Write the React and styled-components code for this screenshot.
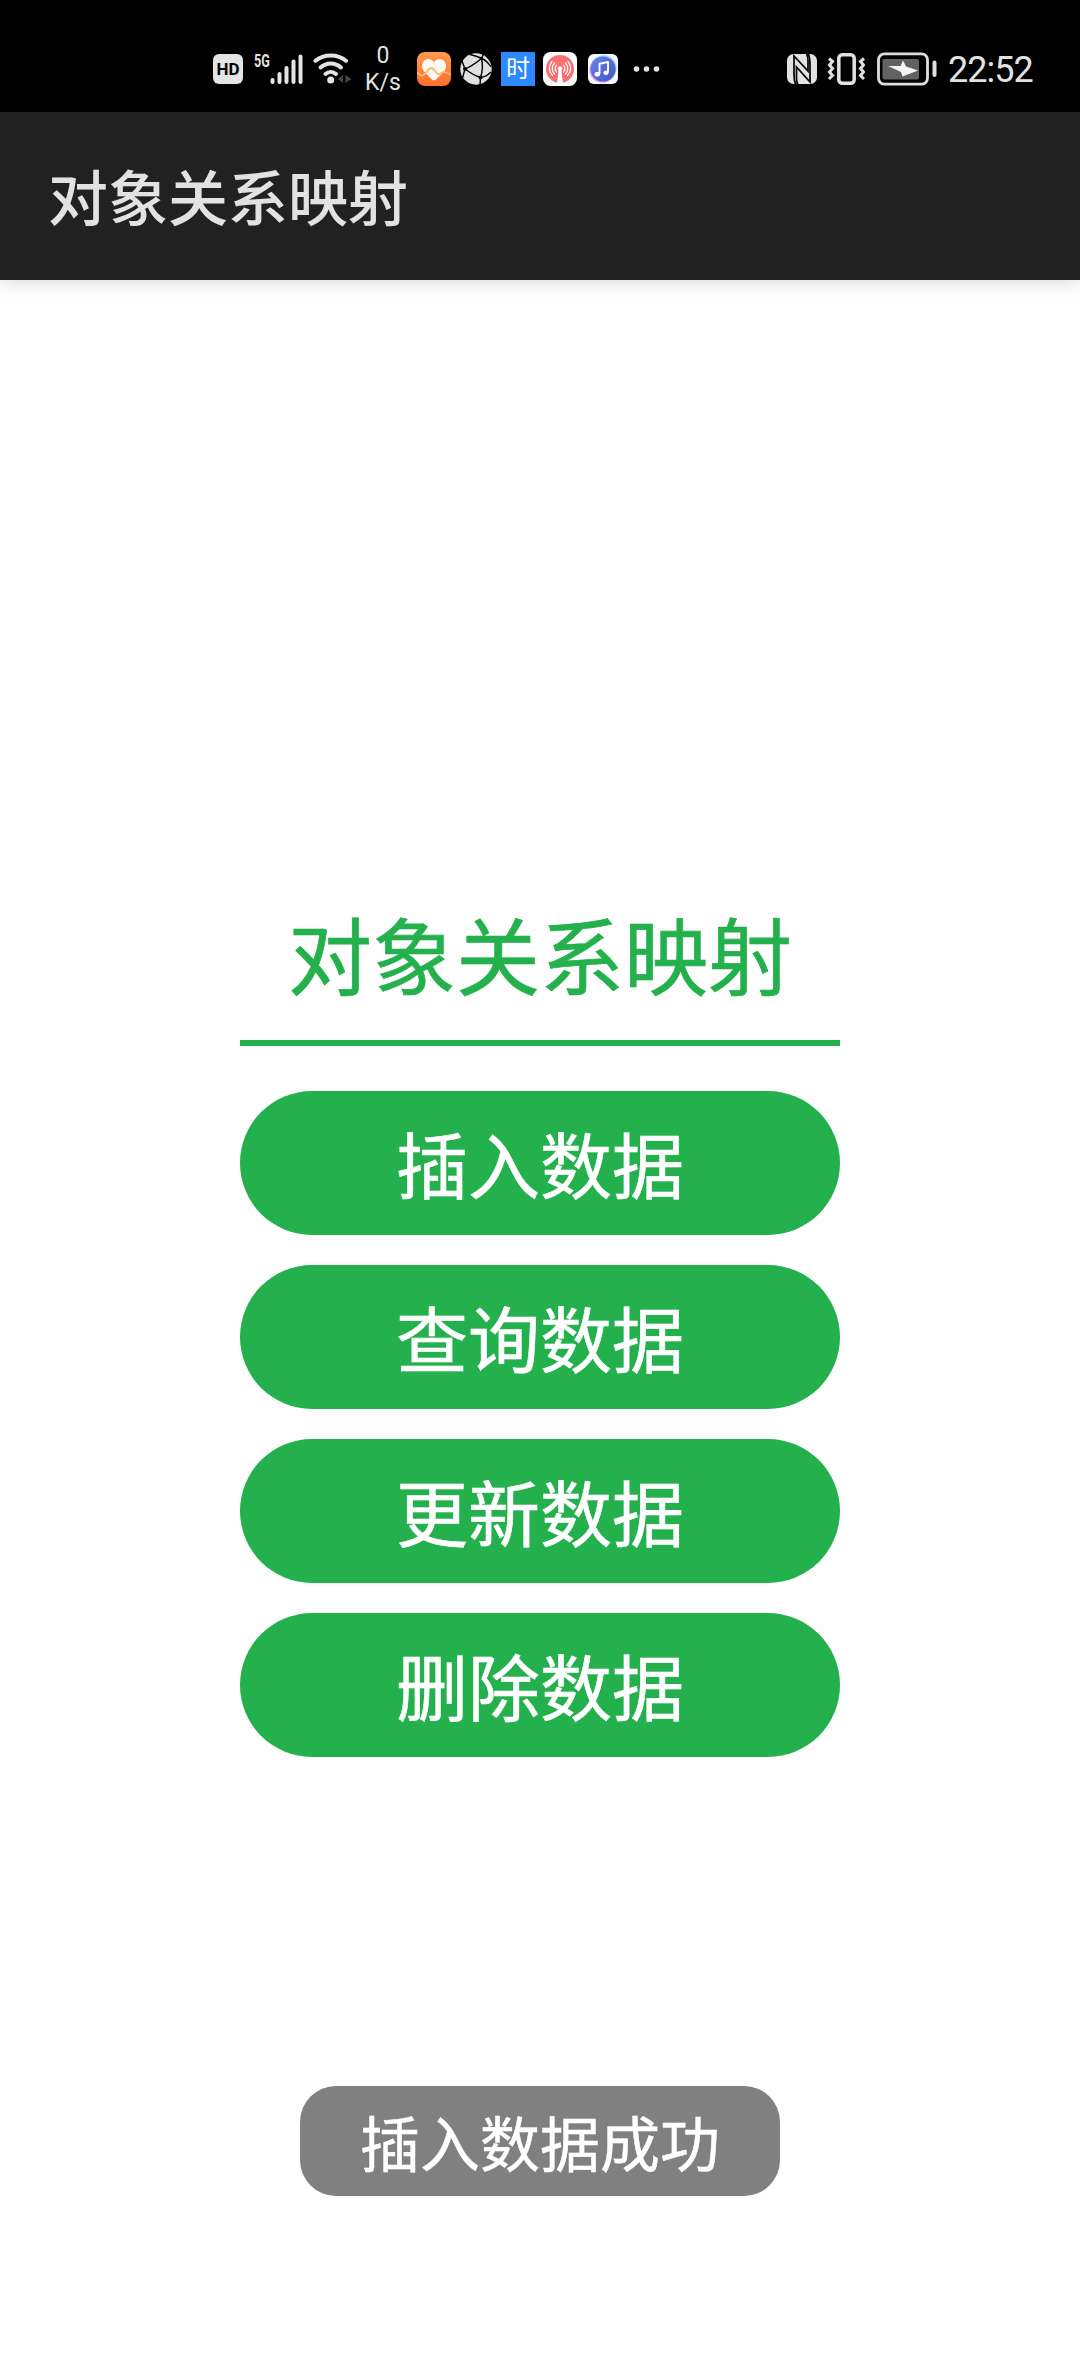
import React from 'react'
import styled, { createGlobalStyle } from 'styled-components'

const actions = ['插入数据', '查询数据', '更新数据', '删除数据']

const App = () => {
  return (
    <Screen>
      <GlobalStyle />
      <StatusBar />
      <AppBar>
        <h1>对象关系映射</h1>
      </AppBar>
      <Main>
        <Panel>
          <Title>对象关系映射</Title>
          <Actions>
            {actions.map((label) => (
              <ActionButton key={label}>{label}</ActionButton>
            ))}
          </Actions>
        </Panel>
      </Main>
      <Toast>插入数据成功</Toast>
    </Screen>
  )
}

const StatusBar = () => (
  <Status>
    <HdBadge>HD</HdBadge>
    <Signal $left={11}>
      <Network>5G</Network>
      <svg width="33" height="32" viewBox="0 0 33 32" stroke="#e4e4e4" strokeWidth="4" strokeLinecap="round">
        <path d="M2.5 27v2M9.5 21v8M16.5 15v14M23.5 8.5v20.5M30.5 3.5v25.5" />
      </svg>
    </Signal>
    <Icon $left={10} width="40" height="34" viewBox="0 0 40 34" fill="none">
      <g stroke="#e4e4e4" strokeWidth="4" strokeLinecap="round">
        <path d="M2.5 8.7C11 1.6 24.5 1.6 33 8.7" />
        <path d="M7.5 15.5C13.5 10 22 10 28 15.5" />
        <path d="M12.5 22C15.7 19.2 19.8 19.2 23 22" />
      </g>
      <circle cx="17.700" cy="28" r="3.500" fill="#e4e4e4" />
      <path d="M30 23v8l-5-4zM32.500 23v8l6-4z" fill="#454545" />
    </Icon>
    <Speed>
      <span>0</span>
      <span>K/s</span>
    </Speed>
    <HeartIcon />
    <GlobeIcon />
    <TimeApp>时</TimeApp>
    <PodcastIcon />
    <MusicIcon />
    <Icon $left={15} width="28" height="34" viewBox="0 0 28 34" fill="#e2e2e2">
      <circle cx="3.500" cy="17" r="2.800" />
      <circle cx="13.500" cy="17" r="2.800" />
      <circle cx="23.500" cy="17" r="2.800" />
    </Icon>
    <StatusRight>
      <NfcIcon />
      <VibrateIcon />
      <BatteryIcon />
      <Clock>22:52</Clock>
    </StatusRight>
  </Status>
)

const HeartIcon = () => (
  <Icon $left={15} width="34" height="34" viewBox="0 0 34 34">
    <defs>
      <linearGradient id="heartBg" x1="0" y1="0" x2="0" y2="1">
        <stop offset="0" stopColor="#ff9a4c" />
        <stop offset="1" stopColor="#ff6e2c" />
      </linearGradient>
    </defs>
    <rect width="34" height="34" rx="8" fill="url(#heartBg)" />
    <path d="M17 10C14 6 9 6 6.500 9.500C4 13.500 5 17.500 8 20.500L15 27.500Q17 29.200 19 27.500L26 20.500C29.500 17 30 12.500 27.500 9.500C25 6 20 6 17 10Z" fill="#fffaf5" />
    <path d="M0 21C2 21 3 24 5.500 23.500C9 22 11.500 16 14.500 16C17.500 16 18.500 22 21.500 22C24 22 25 19.500 27.500 20L34 22.500" stroke="#ffb66a" strokeWidth="1.800" fill="none" />
  </Icon>
)

const GlobeIcon = () => (
  <Icon $left={9} width="32" height="34" viewBox="0 0 32 34" fill="none">
    <circle cx="16" cy="17" r="15.700" fill="#e0e0e0" />
    <g stroke="#000" strokeWidth="1.400">
      <path d="M5 17C10 15 16 11 21.500 6.500M5 17C9 20 14 23.500 20.500 25.500M21.500 6.500C22.800 12 22.800 19 20.500 25.500" />
      <path d="M10 2.500C14 3.500 18 4.500 21.500 6.500C25.500 8 28.500 11 31 15M20.500 25.500C24.500 25 28 23 31 20M20.500 25.500L20 33M21.500 6.500L23.500 2M5 17L2 9M5 17L2.500 26" />
    </g>
    <g fill="#000">
      <circle cx="21.500" cy="6.500" r="1.800" />
      <circle cx="5" cy="17" r="2" />
      <circle cx="20.500" cy="25.500" r="2" />
    </g>
  </Icon>
)

const PodcastIcon = () => (
  <Icon $left={8} width="34" height="34" viewBox="0 0 34 34" fill="none">
    <rect width="34" height="34" rx="7.500" fill="#fff" />
    <circle cx="17" cy="17" r="14" fill="#fb6f70" />
    <path d="M15.800 18h2.400l1.800 14h-6z" fill="#fff" />
    <circle cx="17" cy="16.500" r="2.300" fill="#fff" />
    <g stroke="#fff" strokeWidth="1.200" strokeLinecap="round">
      <path d="M13.500 20C12 18 12 15 13.500 13M20.500 20C22 18 22 15 20.500 13" />
      <path d="M11.500 22C8.500 19 8.500 14 11.500 11M22.500 22C25.500 19 25.500 14 22.500 11" />
      <path d="M9.500 23.500C5.500 19.500 5.500 13.500 9 9.500M24.500 23.500C28.500 19.500 28.500 13.500 25 9.500" />
    </g>
  </Icon>
)

const MusicIcon = () => (
  <Icon $left={11} width="30" height="30" viewBox="0 0 30 30" fill="none">
    <defs>
      <linearGradient id="musicBg" x1="0" y1="0" x2="1" y2="1">
        <stop offset="0" stopColor="#6a82ea" />
        <stop offset="1" stopColor="#3d57cb" />
      </linearGradient>
    </defs>
    <rect width="30" height="30" rx="6" fill="#fbf8ff" />
    <circle cx="14.300" cy="16" r="13" fill="#e8aef5" />
    <circle cx="15.700" cy="14" r="13" fill="#a9dcfb" />
    <circle cx="15" cy="15" r="12.600" fill="url(#musicBg)" />
    <path d="M11.500 20V9.800L20 8V18.500" stroke="#fff" strokeWidth="1.900" strokeLinejoin="round" />
    <ellipse cx="9.300" cy="20.300" rx="2.700" ry="2.300" fill="#fff" />
    <ellipse cx="18" cy="18.800" rx="2.600" ry="2.200" fill="#fff" />
  </Icon>
)

const NfcIcon = () => (
  <Icon width="30" height="30" viewBox="0 0 30 30" fill="none">
    <rect width="30" height="30" rx="6.500" fill="#e2e2e2" />
    <path d="M9 31Q7 27 7 20V2L21 17V7Q21 3 19.500 -1" stroke="#000" strokeWidth="1.700" />
    <path d="M21 -1Q23 3 23 10V28L9.500 13V24Q9.500 28 11 31" stroke="#000" strokeWidth="1.700" />
  </Icon>
)

const VibrateIcon = () => (
  <Icon $left={10} width="38" height="32" viewBox="0 0 38 32" fill="none" stroke="#e2e2e2">
    <rect x="11.800" y="1.800" width="15.400" height="28.400" rx="3.500" strokeWidth="3.500" />
    <path d="M2 5.500L5.500 8.500L2.500 12L5.500 15.500L2.500 19L5.500 22.500L2 26M37 5.500L33.500 8.500L36.500 12L33.500 15.500L36.500 19L33.500 22.500L37 26" strokeWidth="3" />
  </Icon>
)

const BatteryIcon = () => (
  <Icon $left={12} width="60" height="34" viewBox="0 0 60 34" fill="none">
    <rect x="1.500" y="1.800" width="49" height="30.400" rx="6" stroke="#dedede" strokeWidth="2.800" />
    <rect x="5.500" y="7" width="36.500" height="20.500" rx="2" fill="#626262" />
    <path d="M11 14L24 20L25.500 24.500L41 18.500L29 14.500L26 8.500L23.500 14Z" fill="#f5f5f5" />
    <path d="M57.500 10.500V23" stroke="#dedede" strokeWidth="4" strokeLinecap="round" />
  </Icon>
)

const GlobalStyle = createGlobalStyle`
  * {
    box-sizing: border-box;
    margin: 0;
    padding: 0;
  }
  body {
    background: #fefefe;
    font-family: 'Noto Sans CJK SC', sans-serif;
  }
`
const Screen = styled.div`
  position: relative;
  display: flex;
  flex-direction: column;
  width: 1080px;
  height: 2376px;
  overflow: hidden;
  background: #fefefe;
`
const Status = styled.header`
  display: flex;
  align-items: center;
  height: 112px;
  padding: 25px 46px 0 213px;
  background: #000;
  color: #e2e2e2;
  font-family: Roboto, 'Noto Sans CJK SC', sans-serif;
`
const Icon = styled.svg`
  flex: none;
  margin-left: ${({ $left = 0 }) => $left}px;
`
const HdBadge = styled.span`
  display: flex;
  align-items: center;
  justify-content: center;
  width: 30px;
  height: 30px;
  padding-top: 1px;
  border-radius: 6px;
  background: #e4e4e4;
  color: #000;
  font-size: 17px;
  font-weight: 700;
`
const Signal = styled.div`
  display: flex;
  margin-left: ${({ $left }) => $left}px;
`
const Network = styled.span`
  width: 16px;
  font-size: 19px;
  font-weight: 700;
  line-height: 16px;
  transform: scaleX(0.66);
  transform-origin: left;
`
const Speed = styled.div`
  display: flex;
  flex-direction: column;
  align-items: center;
  width: 38px;
  margin-left: 11px;
  font-size: 23px;
  line-height: 27px;
`
const TimeApp = styled.span`
  display: flex;
  align-items: center;
  justify-content: center;
  width: 34px;
  height: 34px;
  margin-left: 9px;
  background: #2b8aff;
  color: #fff;
  font-size: 24px;
  line-height: 34px;
`
const StatusRight = styled.div`
  display: flex;
  align-items: center;
  margin-left: auto;
`
const Clock = styled.time`
  width: 86px;
  margin-left: 11px;
  padding-top: 3px;
  font-size: 36px;
  line-height: 40px;
  letter-spacing: -1px;
  white-space: nowrap;
`
const AppBar = styled.div`
  display: flex;
  align-items: center;
  height: 168px;
  padding: 0 48px 2px;
  background: #212121;
  box-shadow: 0 5px 14px rgba(0, 0, 0, 0.11);
  h1 {
    color: #e2e2e2;
    font-size: 60px;
    font-weight: 500;
    line-height: 84px;
  }
`
const Main = styled.main`
  flex: 1;
  display: flex;
  align-items: center;
  justify-content: center;
`
const Panel = styled.section`
  width: 600px;
`
const Title = styled.h2`
  height: 147px;
  border-bottom: 6px solid #24b14d;
  color: #24b14d;
  font-size: 84px;
  font-weight: 400;
  line-height: 107px;
  text-align: center;
  -webkit-text-stroke: 0.7px;
`
const Actions = styled.div`
  display: flex;
  flex-direction: column;
  gap: 30px;
  padding-top: 45px;
`
const ActionButton = styled.button`
  height: 144px;
  border: none;
  border-radius: 72px;
  background: #24b14d;
  color: #fff;
  font-family: inherit;
  font-size: 72px;
  line-height: 141px;
  padding-bottom: 3px;
  -webkit-text-stroke: 0.6px;
`
const Toast = styled.div`
  position: absolute;
  left: 300px;
  bottom: 180px;
  width: 480px;
  height: 110px;
  border-radius: 36px;
  background: #808080;
  color: #fff;
  font-size: 60px;
  line-height: 109px;
  text-align: center;
  -webkit-text-stroke: 0.5px;
`

export default App
